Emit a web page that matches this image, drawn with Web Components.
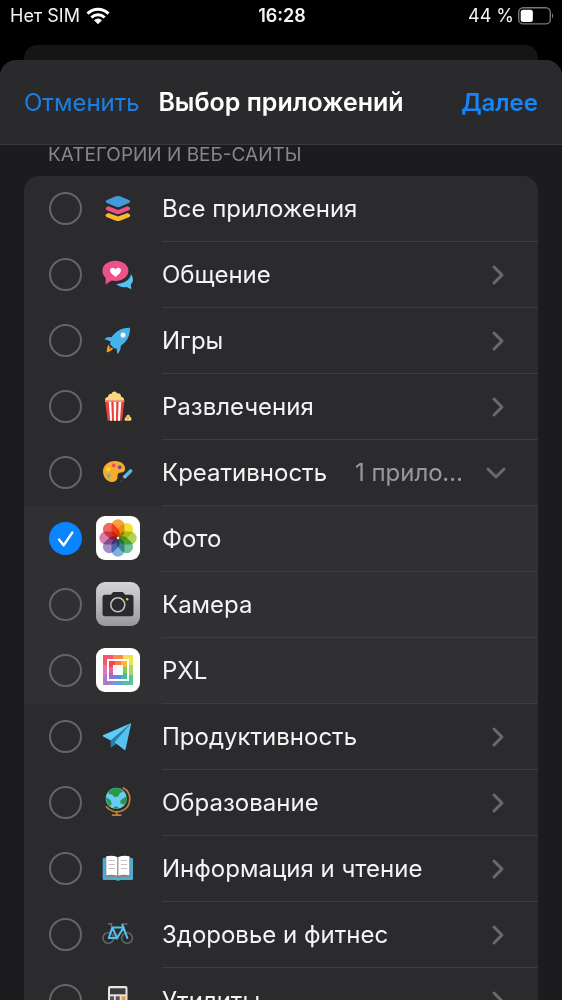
<!DOCTYPE html>
<html lang="ru">
<head>
<meta charset="utf-8">
<meta name="viewport" content="width=device-width, initial-scale=1">
<title>Выбор приложений</title>
<style>
	body {
		margin: 0;
		background: #000;
		color: #f4f4f6;
		font-family: Inter, 'Liberation Sans', sans-serif;
		font-size: 24px;
	}
</style>
</head>
<body>
<app-screen>
	<status-bar slot="status" carrier="Нет SIM" time="16:28" battery="44"></status-bar>
	<sheet-header slot="header">
		<span slot="cancel">Отменить</span>
		Выбор приложений
		<span slot="next">Далее</span>
	</sheet-header>
	<app-group>
		<span slot="title">Категории и веб-сайты</span>
		<app-row><app-icon slot="icon" name="layers"></app-icon>Все приложения</app-row>
		<app-row arrow="right"><app-icon slot="icon" name="social"></app-icon>Общение</app-row>
		<app-row arrow="right"><app-icon slot="icon" name="rocket"></app-icon>Игры</app-row>
		<app-row arrow="right"><app-icon slot="icon" name="popcorn"></app-icon>Развлечения</app-row>
		<app-row arrow="down"><app-icon slot="icon" name="palette"></app-icon>Креативность<span slot="detail">1 приложение</span></app-row>
		<app-row nested checked><app-icon slot="icon" name="photos"></app-icon>Фото</app-row>
		<app-row nested><app-icon slot="icon" name="camera"></app-icon>Камера</app-row>
		<app-row nested><app-icon slot="icon" name="pxl"></app-icon>PXL</app-row>
		<app-row arrow="right"><app-icon slot="icon" name="plane"></app-icon>Продуктивность</app-row>
		<app-row arrow="right"><app-icon slot="icon" name="globe"></app-icon>Образование</app-row>
		<app-row arrow="right"><app-icon slot="icon" name="book"></app-icon>Информация и чтение</app-row>
		<app-row arrow="right"><app-icon slot="icon" name="bike"></app-icon>Здоровье и фитнес</app-row>
		<app-row arrow="right"><app-icon slot="icon" name="calculator"></app-icon>Утилиты</app-row>
	</app-group>
</app-screen>

<script>
	// eight petals turned around the centre of the tile
	const petals = ['#f7942a', '#efe01a', '#a9d046', '#5dbd8a', '#6fa9dc', '#9a80c4', '#d571a8', '#f2564a']
		.map((color, i) => `<rect x="15.5" y="3.3" width="13" height="18.5" rx="6.5" fill="${color}" transform="rotate(${i * 45} 22 22)"/>`)
		.join('');

	const icons = {
		layers: `
			<path d="M20.4 27.3 10.4 30.9Q8.6 29.5 10 28.3L12.5 27.1 22 30.6 31.5 27.1 33.8 28.3Q34.9 29.6 33.5 30.9L24 34.7Q22 35.5 20 34.7L10.4 30.9Z" fill="#f6b92e"/>
			<path d="M10 21.5 12.5 20.3 22 24 31.5 20.3 33.8 21.5Q34.9 22.8 33.5 24L24 27.8Q22 28.5 20 27.8L10.4 24Q9 22.7 10 21.5Z" fill="#ec5188"/>
			<path d="M10.4 14.2 20 10.3Q22 9.5 24 10.3L33.5 14.2Q34.8 15.5 33.5 16.8L24 20.8Q22 21.5 20 20.8L10.4 16.8Q9 15.5 10.4 14.2Z" fill="#429bd9"/>`,
		social: `
			<path d="M35 22.3C38 26.5 37.3 30.5 34.8 32.5L35.3 37.3 30.5 35C26 35.8 22.5 34.2 20.3 32 26.5 32 33.8 28.8 35 22.3Z" fill="#55c2f3"/>
			<path d="M19.4 8.7C26.8 8.7 32.4 12.9 32.4 18.8S26.8 29 19.4 29Q17.4 29 15.6 28.6L9.6 32.4 9.7 25.9C7.5 24 6.4 21.6 6.4 18.8 6.4 12.9 12 8.7 19.4 8.7Z" fill="#ec5188"/>
			<path d="M19.5 25.1C16.8 22.8 14 20.8 14 18.3 14 15.4 17.8 14.8 19.5 17.4 21.2 14.8 25 15.4 25 18.3 25 20.8 22.2 22.8 19.5 25.1Z" fill="#fff"/>`,
		rocket: `
			<path d="M12.6 26.3 13.6 29.2 17.4 30.6Q15 33.5 10.6 34.4 11 29.2 12.6 26.3Z" fill="#f7a823"/>
			<path d="M13.8 28.6 15.8 30 12.6 32.2Z" fill="#a85d22"/>
			<path d="M15.5 19.3C19.5 13.3 25.8 9.3 34 9.7 34.3 17.7 30.8 23.8 25 27.6Q25 32.3 21.8 36.2 20.7 35 20.8 30.6L18.3 30.4 14 26.2 14.7 23.5Q10.5 21.5 8.3 21.2 10.8 18.4 15.5 19.3Z" fill="#45b4ed"/>
			<circle cx="27" cy="17" r="2.5" fill="#fff" stroke="#aac9da" stroke-width=".6"/>`,
		popcorn: `
			<path d="M9.2 17C8.6 14.6 10 13 12 13 11.8 10.8 13.8 9.4 15.5 9.8 16.6 6.8 20.4 6.8 21.2 9.5 23.5 8.9 25.3 10.5 25 12.7 27.6 12.9 28.5 15 27.8 17Z" fill="#fbd77d"/>
			<path d="M9 16.5H28.4L26 36.7H11.7Z" fill="#e64239"/>
			<path d="M12.6 16.5H15.2L16.1 36.7H14.2ZM17.6 16.5H20.3L20 36.7H18ZM22.7 16.5H25.4L23.9 36.7H21.9Z" fill="#fff"/>
			<path d="M9 16.5H28.4L28.2 18H9.2Z" fill="#f08b65"/>
			<path d="M29 36.7C28 35 28.8 33.3 30.3 33 30 30.2 34 30 33.9 32.7 36 33.4 35.7 35.6 34.8 36.7Z" fill="#f8cf72"/>
			<circle cx="32" cy="34" r="1" fill="#d99a42"/>`,
		palette: `
			<path d="M19 11C25 11 29.3 14.6 29.1 18.8 28.8 22.2 26.5 22.3 24 22.8 20.8 23.5 22 26 21.3 28.6 20.6 31.7 16.8 33 13.5 31.5 9.5 29.8 7 25.6 7 21.4 7 15.3 12.3 11 19 11Z" fill="#f6ad2d"/>
			<circle cx="17.7" cy="15.5" r="2" fill="#eb5554"/>
			<circle cx="23.6" cy="17.3" r="2" fill="#765873"/>
			<circle cx="12.3" cy="19.3" r="2" fill="#f5dc29"/>
			<circle cx="12.7" cy="25.7" r="2" fill="#66b7a5"/>
			<path d="M28.8 26.7 34.6 21" stroke="#55b9e8" stroke-width="3.6" stroke-linecap="round"/>
			<path d="M28 25.5 30 27.5" stroke="#9cbccc" stroke-width="1.2"/>
			<path d="M23.5 32.5Q24.8 29.8 27.2 29.4 26.2 32 23.5 32.5Z" fill="#3b4d65"/>`,
		photos: `
			<rect width="44" height="44" rx="9" fill="#fff"/>
			<g class="petals">${petals}</g>
			<circle cx="22" cy="22" r="1.2" fill="#fff"/>`,
		camera: `
			<linearGradient id="metal" x2="0" y2="1"><stop stop-color="#d5d4da"/><stop offset="1" stop-color="#99989f"/></linearGradient>
			<rect width="44" height="44" rx="9" fill="url(#metal)"/>
			<path d="M9 12.7H14.5C16 12.7 16 10 18 10H26C28 10 28 12.7 29.5 12.7H35Q37.5 12.7 37.5 15.2V31.7Q37.5 34.2 35 34.2H9Q6.5 34.2 6.5 31.7V15.2Q6.5 12.7 9 12.7Z" fill="#2a2a2d"/>
			<circle cx="21.8" cy="22.8" r="7" fill="none" stroke="#c3c2c8" stroke-width="1.5"/>
			<circle cx="31.2" cy="17.2" r="1.2" fill="#f5c52c"/>`,
		pxl: `
			<rect width="44" height="44" rx="9" fill="#fff"/>
			<g fill="none" stroke-width="4">
				<path d="M9 17V9H17" stroke="#f4576c"/><path d="M17 9H27" stroke="#f98a4b"/><path d="M27 9H35V17" stroke="#f2e24c"/>
				<path d="M35 17V27" stroke="#a4da63"/><path d="M35 27V35H27" stroke="#52c596"/><path d="M27 35H17" stroke="#669fe3"/>
				<path d="M17 35H9V27" stroke="#a67bd4"/><path d="M9 27V17" stroke="#e873b4"/>
			</g>
			<g fill="none" stroke-width="4">
				<path d="M15 19V15H19" stroke="#f4474c"/><path d="M19 15H25" stroke="#f97a3b"/><path d="M25 15H29V19" stroke="#f2b83c"/>
				<path d="M29 19V25" stroke="#83cc56"/><path d="M29 25V29H25" stroke="#42bd96"/><path d="M25 29H19" stroke="#568fe3"/>
				<path d="M19 29H15V25" stroke="#9a6bd0"/><path d="M15 25V19" stroke="#e85fa0"/>
			</g>`,
		plane: `
			<path d="M35.3 9 14.7 26.5V33.8L21 29.5Z" fill="#267fa9"/>
			<path d="M35.3 9 6.8 21.3Q6.4 22 7.2 22.4L14.7 26.5Z" fill="#5fccf8"/>
			<path d="M35.3 9 18.5 28.2 28.5 36Q29.3 36.2 29.5 35.4Z" fill="#55c3f1"/>`,
		globe: `
			<circle cx="20.3" cy="18.4" r="10.6" fill="#6acbf6"/>
			<path d="M13 10.8C16 8.2 21 7 24.5 8.8L27.5 11.5 24 13 22 16.5 18.5 17 16 14.5 12.6 14ZM10 17 14.3 20 15.8 23.5 14 26.5Q9.8 22.5 10 17ZM30.8 16.3Q31.2 21.5 28.3 24.7L24.3 23.4 24.6 20.2 27.6 18ZM19 26 23 27.5 20.5 29 17 28.4Z" fill="#279b43"/>
			<path d="M27.5 8C36.3 13 35.7 26.2 26.8 30.5 20.7 33.4 14 31.5 10.3 26.8" fill="none" stroke="#c58037" stroke-width="1.7" stroke-linecap="round"/>
			<path d="M20.7 31.7V34.8M16.7 35.1H24.7" stroke="#c58037" stroke-width="1.8" stroke-linecap="round"/>`,
		book: `
			<path d="M8 12H35.7Q37 12 37 13.3V32.7Q37 34 35.7 34H25Q22 35.6 19 34H8Q6.7 34 6.7 32.7V13.3Q6.7 12 8 12Z" fill="#48aed5"/>
			<path d="M9.3 11Q15.5 9 21.8 11.3 28 9 34.3 11V31H24L21.8 32 19.6 31H9.3Z" fill="#8b8481"/>
			<path d="M10.3 10.3Q16 8.8 21.2 11V29.6Q16 28 10.3 29.3ZM22.4 11Q28 8.8 33.3 10.3V29.3Q28 28 22.4 29.6Z" fill="#fff"/>
			<path d="M12.5 14.5H19M12.5 18.5H19M12.5 22.5H19M24.7 14.5H31.2M24.7 18.5H31.2M24.7 22.5H31.2" stroke="#c4c4c4"/>`,
		bike: `
			<g fill="none" stroke="#6b6c70" stroke-width="1.4"><circle cx="12.3" cy="26" r="5.4"/><circle cx="31" cy="26" r="5.4"/><path d="M12 11.8H16.3M15 12 16 15M27.3 12H31.5"/></g>
			<path d="M12.8 26 16.3 15.5 21 26H12.8ZM21 26 27.7 15.5H16.3M26.3 12.5 31.3 26" fill="none" stroke="#55bfe9" stroke-width="2.1" stroke-linejoin="round" stroke-linecap="round"/>
			<circle cx="20.8" cy="26" r="1.6" fill="#55bfe9"/>`,
		calculator: `
			<rect x="12" y="8" width="19.5" height="28" rx="2" fill="#e7e4e2"/>
			<rect x="14" y="10.3" width="15.5" height="6" fill="#3b3b3d"/>
			<path d="M14 18.3H18V22H14ZM19.7 18.3H23.7V22H19.7ZM14 24H18V28H14ZM19.7 24H23.7V28H19.7Z" fill="#555558"/>
			<path d="M25.5 18.3H29.5V33H25.5Z" fill="#ee9834"/>`,
	};

	customElements.define(
		'app-icon',
		class extends HTMLElement {
			constructor() {
				super();
				const shadowRoot = this.attachShadow({ mode: 'open' });
				shadowRoot.innerHTML = `
					<style>
						:host { display: block; width: 44px; height: 44px; }
						svg { display: block; }
						.petals { isolation: isolate; }
						.petals rect { mix-blend-mode: multiply; opacity: .9; }
					</style>
					<svg width="44" height="44" viewBox="0 0 44 44" fill="none" aria-hidden="true">${icons[this.getAttribute('name')]}</svg>
				`;
			}
		},
	);

	customElements.define(
		'status-bar',
		class extends HTMLElement {
			constructor() {
				super();
				const shadowRoot = this.attachShadow({ mode: 'open' });
				const level = this.getAttribute('battery');
				shadowRoot.innerHTML = `
					<style>
						:host {
							display: grid;
							grid-template-columns: 1fr auto 1fr;
							align-items: center;
							height: 31px;
							padding: 0 8px 0 10px;
							font-size: 18px;
						}
						div { display: flex; align-items: center; gap: 6px; }
						.power { justify-content: flex-end; gap: 4px; }
						time { font-weight: 600; }
						svg { display: block; }
					</style>
					<div>
						<span>${this.getAttribute('carrier')}</span>
						<svg width="24" height="18" viewBox="0 0 24 18" fill="none" stroke="#fff" stroke-width="3" aria-hidden="true">
							<path d="M1.5 6.6C7.5.7 16.5.7 22.5 6.6M5.4 10.5C9.2 6.8 14.8 6.8 18.6 10.5"/>
							<path d="M8 13.2Q12 9.7 16 13.2L12 17.2Z" fill="#fff" stroke="none"/>
						</svg>
					</div>
					<time>${this.getAttribute('time')}</time>
					<div class="power">
						<span>${level} %</span>
						<svg width="36" height="18" viewBox="0 0 36 18" aria-hidden="true">
							<rect x=".7" y=".7" width="31.6" height="16.2" rx="4.5" fill="none" stroke="#77777a" stroke-width="1.4"/>
							<rect x="2.7" y="2.7" width="${27.6 * level / 100}" height="12.2" rx="2.5" fill="#fff"/>
							<path d="M34 6Q36.5 8.8 34 11.6Z" fill="#77777a"/>
						</svg>
					</div>
				`;
			}
		},
	);

	customElements.define(
		'sheet-header',
		class extends HTMLElement {
			constructor() {
				super();
				const shadowRoot = this.attachShadow({ mode: 'open' });
				shadowRoot.innerHTML = `
					<style>
						:host {
							display: grid;
							grid-template-columns: 1fr auto 1fr;
							align-items: center;
							height: 84px;
							padding: 0 24px;
							background: #2a2a2c;
							border-bottom: 1px solid #3a3a3d;
						}
						h1 { margin: 0; font-size: 25px; font-weight: 600; color: #fff; }
						button {
							justify-self: start;
							padding: 0;
							border: 0;
							background: none;
							color: #1b7fe6;
							font: inherit;
							cursor: pointer;
						}
						.next { justify-self: end; color: #1585f8; font-weight: 600; }
					</style>
					<button type="button"><slot name="cancel"></slot></button>
					<h1><slot></slot></h1>
					<button type="button" class="next"><slot name="next"></slot></button>
				`;
			}
		},
	);

	customElements.define(
		'app-row',
		class extends HTMLElement {
			constructor() {
				super();
				const shadowRoot = this.attachShadow({ mode: 'open' });
				const arrow = this.getAttribute('arrow');
				const path = arrow === 'down' ? 'M3 7 11 15 19 7' : 'M9 3 17 11 9 19';
				shadowRoot.innerHTML = `
					<style>
						:host { display: flex; height: 66px; padding-left: 25px; background: #2b2b2d; }
						:host([nested]) { background: #303032; }
						label { display: grid; grid-template-columns: auto auto auto; flex: none; cursor: pointer; }
						input {
							appearance: none;
							width: 33px;
							height: 33px;
							margin: 0;
							border: 2px solid #64646a;
							border-radius: 50%;
						}
						input:checked {
							border: 0;
							background: #0b84ff;
						}
						.box, ::slotted(app-icon) { align-self: center; margin-bottom: 2px; }
						.box { display: grid; margin-right: 14px; }
						.box > * { grid-area: 1 / 1; }
						.box svg { display: none; pointer-events: none; }
						input:checked + svg { display: block; }
						.text { display: flex; align-items: center; margin-left: 22px; }
						.end {
							display: flex;
							flex: 1;
							align-items: center;
							justify-content: flex-end;
							min-width: 0;
							padding-right: 31px;
						}
						.text, .end { border-bottom: 1px solid #3d3d40; }
						:host(:last-child) .text, :host(:last-child) .end { border-color: transparent; }
						::slotted([slot='detail']) {
							flex: 0 1 112px;
							overflow: hidden;
							color: #98989f;
							text-overflow: ellipsis;
							white-space: nowrap;
							margin-right: 18px;
						}
						button { flex: none; padding: 0; border: 0; background: none; cursor: pointer; }
						button svg { display: block; }
					</style>
					<label>
						<span class="box">
							<input type="checkbox" ${this.hasAttribute('checked') ? 'checked' : ''}>
							<svg width="33" height="33" viewBox="0 0 33 33" fill="none" stroke="#fff" stroke-width="2.4" stroke-linecap="round" stroke-linejoin="round" aria-hidden="true"><path d="M10 17.5 14.6 23.3 23.3 10.5"/></svg>
						</span>
						<slot name="icon"></slot>
						<span class="text"><slot></slot></span>
					</label>
					<div class="end">
						<slot name="detail"></slot>
						${arrow ? `<button type="button" aria-label="Показать приложения" aria-expanded="${arrow === 'down'}">
							<svg width="22" height="22" viewBox="0 0 22 22" fill="none" stroke="#69696e" stroke-width="3" stroke-linecap="round" stroke-linejoin="round" aria-hidden="true"><path d="${path}"/></svg>
						</button>` : ''}
					</div>
				`;
			}
		},
	);

	customElements.define(
		'app-group',
		class extends HTMLElement {
			constructor() {
				super();
				const shadowRoot = this.attachShadow({ mode: 'open' });
				shadowRoot.innerHTML = `
					<style>
						:host { display: block; padding: 0 24px; }
						h2 {
							margin: 0;
							padding: 0 24px 12px;
							font-size: 19px;
							line-height: 19px;
							font-weight: 400;
							color: #86868c;
							text-transform: uppercase;
						}
						.card { overflow: hidden; border-radius: 15px; }
					</style>
					<h2><slot name="title"></slot></h2>
					<div class="card"><slot></slot></div>
				`;
			}
		},
	);

	customElements.define(
		'app-screen',
		class extends HTMLElement {
			constructor() {
				super();
				const shadowRoot = this.attachShadow({ mode: 'open' });
				shadowRoot.innerHTML = `
					<style>
						:host { display: flex; flex-direction: column; height: 100vh; }
						/* edge of the screen that lies under the sheet */
						.under {
							flex: none;
							height: 15px;
							margin: 14px 24px 0;
							border-radius: 13px 13px 0 0;
							background: #151516;
						}
						.sheet {
							display: flex;
							flex: 1;
							flex-direction: column;
							min-height: 0;
							overflow: hidden;
							border-radius: 16px 16px 0 0;
							background: #1c1c1e;
						}
						main { flex: 1; min-height: 0; overflow-y: auto; scrollbar-width: none; }
					</style>
					<slot name="status"></slot>
					<div class="under"></div>
					<div class="sheet">
						<slot name="header"></slot>
						<main><slot></slot></main>
					</div>
				`;
			}
		},
	);
</script>
</body>
</html>
